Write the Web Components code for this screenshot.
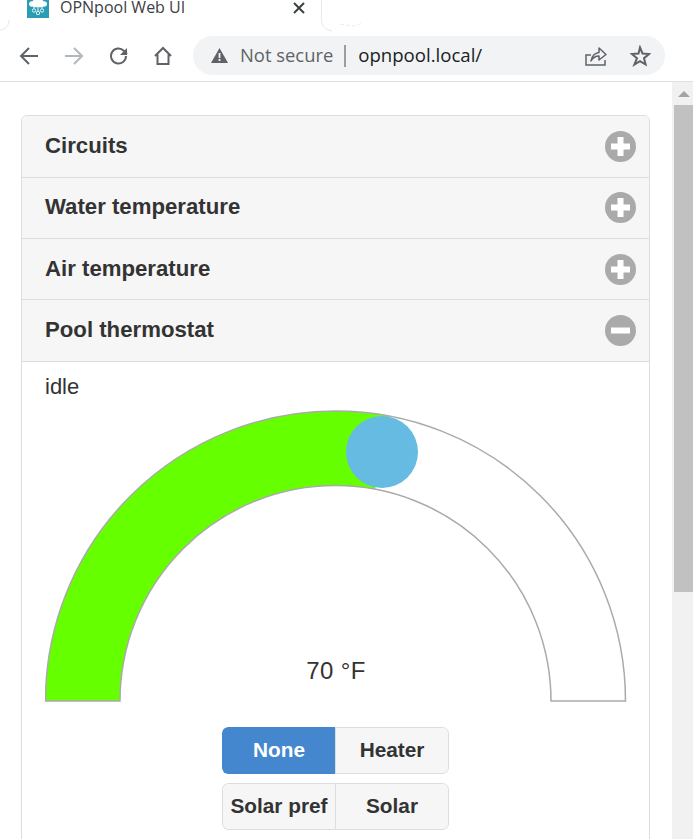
<!DOCTYPE html>
<html>
<head>
<meta charset="utf-8">
<title>OPNpool Web UI</title>
<style>
  html, body { margin: 0; height: 100%; overflow: hidden; background: #fff; }
  body { display: flex; flex-direction: column; font-family: "Liberation Sans", Arial, sans-serif; color: #333; }
</style>
</head>
<body>
<browser-chrome title-text="OPNpool Web UI" url="opnpool.local/"></browser-chrome>
<page-view>
  <accordion-group>
    <accordion-item label="Circuits"></accordion-item>
    <accordion-item label="Water temperature"></accordion-item>
    <accordion-item label="Air temperature"></accordion-item>
    <accordion-item label="Pool thermostat" open>
      <thermostat-panel state="idle" temp="70 °F">
        <button-group>
          <group-button active>None</group-button>
          <group-button>Heater</group-button>
        </button-group>
        <button-group>
          <group-button>Solar pref</group-button>
          <group-button>Solar</group-button>
        </button-group>
      </thermostat-panel>
    </accordion-item>
  </accordion-group>
</page-view>

<script>
class BrowserChrome extends HTMLElement {
  constructor() {
    super();
    this.attachShadow({ mode: 'open' });
    this.shadowRoot.innerHTML = `
<style>
  :host { display: block; flex: none; height: 82px; box-sizing: border-box; border-bottom: 1px solid #dfdfdf; background: #fff; overflow: hidden; font-family: "Open Sans", "Noto Sans", sans-serif; }
  .strip { height: 36px; position: relative; }
  .curves { position: absolute; left: 0; top: 0; }
  .tab { display: flex; align-items: flex-start; height: 36px; box-sizing: border-box; width: 322px; padding-left: 27px; }
  .fav { flex: none; margin: -4px 11px 0 0; }
  .tab-title { font-size: 16px; color: #3c4043; line-height: 14px; white-space: nowrap; flex: 1; }
  .close { flex: none; margin: 2px 17px 0 0; }
  .tools { display: flex; align-items: center; height: 39px; padding-left: 18px; }
  .tools > svg { flex: none; }
  .omni { flex: none; width: 472px; height: 39px; margin-left: 19px; box-sizing: border-box; padding: 0 14px 0 17px; background: #f1f3f4; border-radius: 20px; display: flex; align-items: center; }
  .warn-text { font-size: 18.4px; color: #5f6368; margin-left: 11px; padding-bottom: 2px; }
  .sep { width: 2px; height: 22px; background: #9a9ea2; margin: 0 12px 0 11px; }
  .url { font-size: 18.6px; color: #202124; flex: 1; padding-bottom: 2px; }
</style>
<div class="strip">
  <svg class="curves" width="400" height="36" viewBox="0 0 400 36">
    <path d="M9 20C9 26 5 30 0 30M321.5 0V20C321.5 26 326 30 332 31" fill="none" stroke="#e8e8e8"/>
    <path d="M340 24l8 1.5 6 0.5 7-2.5" fill="none" stroke="#ececec" stroke-dasharray="4 2"/>
  </svg>
  <div class="tab">
    <svg class="fav" width="22" height="22" viewBox="0 0 22 22">
      <rect width="22" height="22" fill="#2a9cb4"/>
      <path d="M2 8c0-2 2-3 3.500-2.500C6 3.500 9 3 11 4c2-1 5-.5 5.500 1.500C18 5 20 6 20 8s-2 3-3.500 2.500c-1.500 1-3.500 1-5.500.5-2 .5-4 .5-5.500-.5C4 11 2 10 2 8z" fill="#fff"/>
      <path d="M7 10.500v2M11 10.500v4.500M15 10.500v2" stroke="#e6f6f9" stroke-width="1"/>
      <circle cx="7" cy="14.500" r="1.700" fill="none" stroke="#e6f6f9"/>
      <circle cx="11" cy="17" r="1.700" fill="none" stroke="#e6f6f9"/>
      <circle cx="15" cy="14.500" r="1.700" fill="none" stroke="#e6f6f9"/>
    </svg>
    <span class="tab-title"></span>
    <svg class="close" width="12" height="12" viewBox="0 0 12 12"><path d="M1 1l10 10M11 1L1 11" stroke="#3c4043" stroke-width="2"/></svg>
  </div>
</div>
<div class="tools">
  <svg width="22" height="22" viewBox="0 0 22 22"><path d="M20 11H4M11 3l-8 8 8 8" fill="none" stroke="#5f6368" stroke-width="2"/></svg>
  <svg style="margin-left:23px" width="22" height="22" viewBox="0 0 22 22"><path d="M2 11h16M11 3l8 8-8 8" fill="none" stroke="#b4b7ba" stroke-width="2"/></svg>
  <svg style="margin-left:23px" width="22" height="22" viewBox="0 0 22 22"><path d="M18 11a7.500 7.500 0 1 1-2.200-5.300L19 9" fill="none" stroke="#5f6368" stroke-width="2"/><path d="M19 3v7h-7z" fill="#5f6368"/></svg>
  <svg style="margin-left:22px" width="22" height="22" viewBox="0 0 22 22"><path d="M3 11l8-8 8 8M5.500 9.500V19h11V9.500" fill="none" stroke="#5f6368" stroke-width="2"/></svg>
  <div class="omni">
    <svg width="19" height="17" viewBox="0 0 19 17"><path d="M9.500 1L18 16H1z" fill="#5f6368"/><path d="M8.600 6h1.800v5H8.600zM8.600 12h1.800v2H8.600z" fill="#f1f3f4"/></svg>
    <span class="warn-text">Not secure</span>
    <span class="sep"></span>
    <span class="url"></span>
    <svg width="22" height="22" viewBox="0 0 22 22"><path d="M20 15v5H1V10h5" fill="none" stroke="#5f6368" stroke-width="1.500"/><path d="M6 16c1-5 4-8 8-8.500V3l7 6.500-7 5.500v-4c-3 0-6 1.500-8 5z" fill="none" stroke="#5f6368" stroke-width="1.500" stroke-linejoin="round"/></svg>
    <svg style="margin-left:22px" width="22" height="22" viewBox="0 0 22 22"><path d="M11 2.500l2.500 6 6.500.5-5 4.200 1.600 6.300-5.600-3.400-5.600 3.400L8 13.200 3 9l6.500-.5z" fill="none" stroke="#5f6368" stroke-width="2"/></svg>
  </div>
</div>`;
  }

  connectedCallback() {
    this.shadowRoot.querySelector('.tab-title').textContent = this.getAttribute('title-text');
    this.shadowRoot.querySelector('.url').textContent = this.getAttribute('url');
  }
}

class PageView extends HTMLElement {
  constructor() {
    super();
    this.attachShadow({ mode: 'open' });
    this.shadowRoot.innerHTML = `
<style>
  :host { display: flex; flex: 1; min-height: 0; }
  .content { flex: 1; min-width: 0; padding: 33.2px 22px 0 21px; overflow: hidden; }
  .bar { flex: none; width: 21px; box-sizing: border-box; background: #f1f1f1; padding-left: 2px; }
  .up { height: 23px; display: flex; align-items: center; justify-content: center; }
  .up i { display: block; border: 6px solid transparent; border-top: 0; border-bottom: 6px solid #a3a3a3; }
  .thumb { height: 487px; background: #c1c1c1; }
</style>
<div class="content"><slot></slot></div>
<div class="bar"><div class="up"><i></i></div><div class="thumb"></div></div>`;
  }
}

class AccordionGroup extends HTMLElement {
  constructor() {
    super();
    this.attachShadow({ mode: 'open' });
    this.shadowRoot.innerHTML = `
<style>
  :host { display: block; border: 1px solid #ddd; border-radius: 6px; overflow: hidden; background: #fff; }
</style>
<slot></slot>`;
  }
}

class AccordionItem extends HTMLElement {
  static get observedAttributes() {
    return ['label', 'open'];
  }

  constructor() {
    super();
    this.attachShadow({ mode: 'open' });
    this.shadowRoot.innerHTML = `
<style>
  :host { display: block; }
  .head { display: flex; align-items: center; justify-content: space-between; height: 60.4px; padding: 0 13px 0 23px; background: #f6f6f6; border-bottom: 1px solid #ddd; cursor: pointer; }
  .label { font-size: 22.2px; font-weight: 700; color: #333; padding-bottom: .8px; }
  .icon { width: 31px; height: 31px; flex: none; }
  .body { display: none; }
  :host([open]) .body { display: block; }
</style>
<div class="head">
  <span class="label"></span>
  <svg class="icon" viewBox="0 0 31 31">
    <circle cx="15.500" cy="15.500" r="15.500" fill="#aaa"/>
    <rect x="6" y="12.500" width="19" height="6" fill="#fff"/>
    <rect class="vert" x="12.500" y="6" width="6" height="19" fill="#fff"/>
  </svg>
</div>
<div class="body"><slot></slot></div>`;
    this.head = this.shadowRoot.querySelector('.head');
    this.head.addEventListener('click', () => this.toggleAttribute('open'));
  }

  attributeChangedCallback(name, oldValue, newValue) {
    if (name === 'label') {
      this.shadowRoot.querySelector('.label').textContent = newValue;
    } else {
      this.shadowRoot.querySelector('.vert').style.display = newValue === null ? '' : 'none';
    }
  }
}

class ThermostatPanel extends HTMLElement {
  constructor() {
    super();
    this.attachShadow({ mode: 'open' });
    this.shadowRoot.innerHTML = `
<style>
  :host { display: block; padding: 12.8px 23px 40px; }
  .state { font-size: 22px; line-height: 24px; color: #333; }
  svg { display: block; margin-top: 11px; }
  text { font-family: "Liberation Sans", Arial, sans-serif; font-size: 24px; letter-spacing: .4px; fill: #333; }
  .buttons { display: flex; flex-direction: column; align-items: center; gap: 9px; margin-top: 25px; }
</style>
<div class="state"></div>
<svg width="582" height="292" viewBox="0 0 582 292">
  <path d="M.5 291A290 290 0 0 1 580.5 291H506A215.500 215.500 0 0 0 75 291Z" fill="#fff"/>
  <path d="M.5 291A290 290 0 0 1 343.700 6L330.100 79.200A215.500 215.500 0 0 0 75 291Z" fill="#6f0"/>
  <path d="M.5 291A290 290 0 0 1 580.500 291H506A215.500 215.500 0 0 0 75 291Z" fill="none" stroke="#aaa" stroke-width="1.500"/>
  <circle cx="337" cy="42" r="36" fill="#66bbe3"/>
  <text x="291" y="269" text-anchor="middle" class="temp"></text>
</svg>
<div class="buttons"><slot></slot></div>`;
  }

  connectedCallback() {
    this.shadowRoot.querySelector('.state').textContent = this.getAttribute('state');
    this.shadowRoot.querySelector('.temp').textContent = this.getAttribute('temp');
  }
}

class ButtonGroup extends HTMLElement {
  constructor() {
    super();
    this.attachShadow({ mode: 'open' });
    this.shadowRoot.innerHTML = `
<style>
  :host { display: flex; width: 227px; height: 47px; border-radius: 6px; overflow: hidden; }
  ::slotted(group-button) { flex: 1 1 0; }
  ::slotted(group-button:last-child) { border-right: 1px solid #ddd; border-top-right-radius: 6px; border-bottom-right-radius: 6px; }
  ::slotted(group-button:first-child) { border-top-left-radius: 6px; border-bottom-left-radius: 6px; }
</style>
<slot></slot>`;
  }
}

class GroupButton extends HTMLElement {
  constructor() {
    super();
    this.attachShadow({ mode: 'open' });
    this.shadowRoot.innerHTML = `
<style>
  :host { display: flex; align-items: center; justify-content: center; box-sizing: border-box; min-width: 0; border: 1px solid #ddd; border-right: 0; background: #f6f6f6; font-size: 20.8px; font-weight: 700; color: #333; white-space: nowrap; cursor: pointer; }
  :host([active]) { background: #4487cf; border-color: #4487cf; color: #fff; }
</style>
<slot></slot>`;
  }
}

customElements.define('browser-chrome', BrowserChrome);
customElements.define('page-view', PageView);
customElements.define('accordion-group', AccordionGroup);
customElements.define('accordion-item', AccordionItem);
customElements.define('thermostat-panel', ThermostatPanel);
customElements.define('button-group', ButtonGroup);
customElements.define('group-button', GroupButton);
</script>
</body>
</html>
